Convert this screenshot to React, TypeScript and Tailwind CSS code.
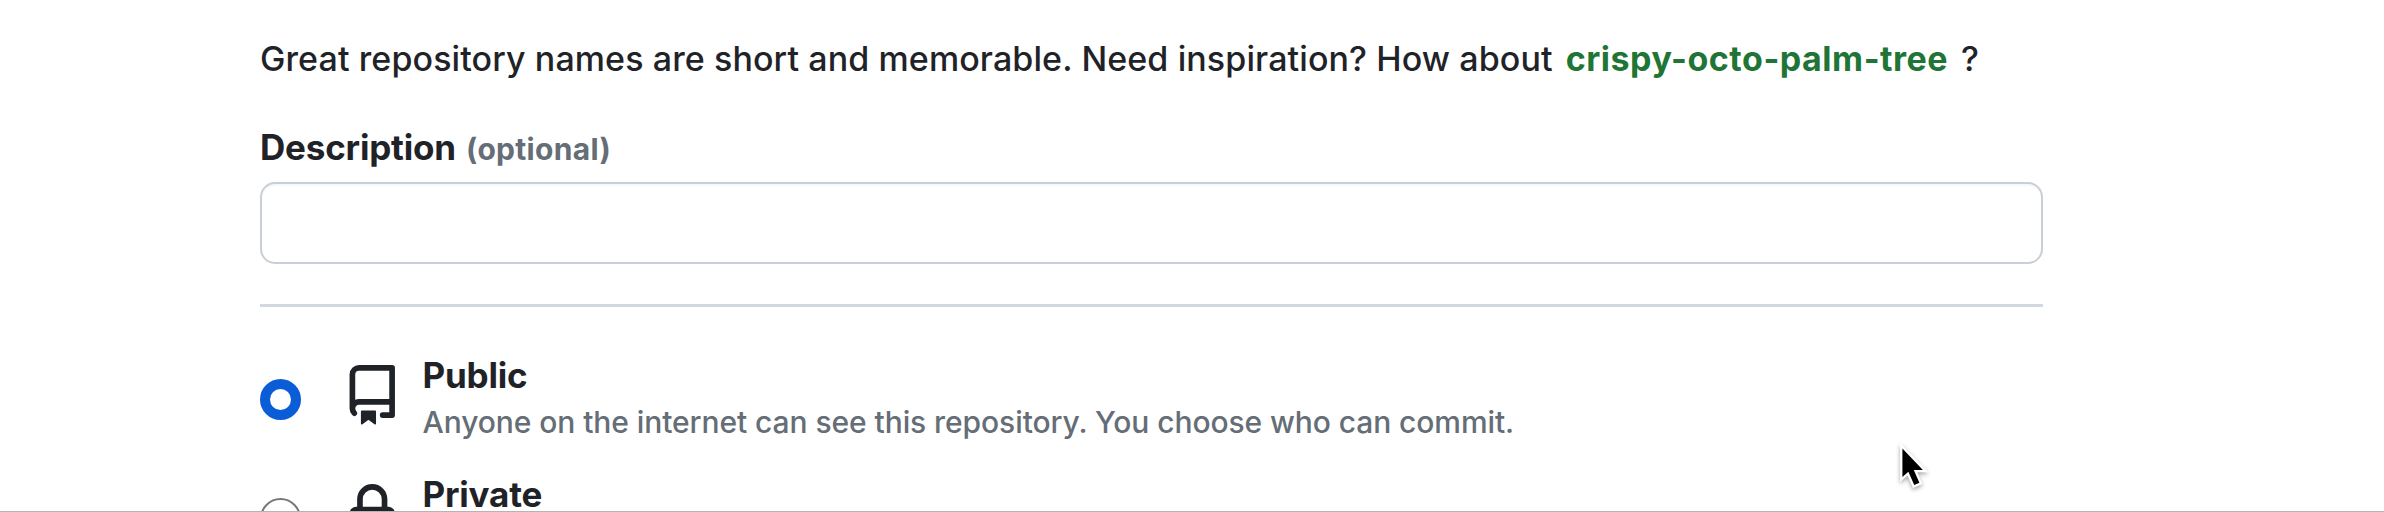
function RepoIcon() {
  return (
    <svg viewBox="0 0 16 16" className="h-[60.5px] w-[60.5px]" fill="currentColor" aria-hidden="true">
      <path d="M2 2.5A2.5 2.5 0 0 1 4.5 0h8.75a.75.75 0 0 1 .75.75v12.5a.75.75 0 0 1-.75.75h-2.5a.75.75 0 0 1 0-1.5h1.75v-2h-8a1 1 0 0 0-.714 1.7.75.75 0 1 1-1.072 1.05A2.495 2.495 0 0 1 2 11.5Zm10.5-1h-8a1 1 0 0 0-1 1v6.708A2.486 2.486 0 0 1 4.5 9h8ZM5 12.25a.25.25 0 0 1 .25-.25h3.5a.25.25 0 0 1 .25.25v3.25a.25.25 0 0 1-.4.2l-1.45-1.087a.249.249 0 0 0-.3 0L5.4 15.7a.25.25 0 0 1-.4-.2Z" />
    </svg>
  );
}

function LockIcon() {
  return (
    <svg viewBox="0 0 16 16" className="h-[60.5px] w-[60.5px]" fill="currentColor" aria-hidden="true">
      <path d="M4 4a4 4 0 0 1 8 0v2h.25c.966 0 1.75.784 1.75 1.75v5.5A1.75 1.75 0 0 1 12.25 15h-8.5A1.75 1.75 0 0 1 2 13.25v-5.5C2 6.784 2.784 6 3.75 6H4Zm8.25 3.5h-8.5a.25.25 0 0 0-.25.25v5.5c0 .138.112.25.25.25h8.5a.25.25 0 0 0 .25-.25v-5.5a.25.25 0 0 0-.25-.25ZM10.5 6V4a2.5 2.5 0 1 0-5 0v2Z" />
    </svg>
  );
}

function Pointer() {
  return (
    <svg
      viewBox="0 0 40 50"
      className="absolute left-[1896px] top-[441px] h-[50px] w-[40px] drop-shadow-[0_2px_2px_rgba(0,0,0,0.35)]"
      aria-hidden="true"
    >
      <path
        d="M6.4 7.6V36L12.4 30.7L18.2 44L23.4 41.8L17.8 29H26.9Z"
        fill="#000"
        stroke="#fff"
        strokeWidth="4.6"
        paintOrder="stroke"
      />
    </svg>
  );
}

export default function App() {
  return (
    <main className="relative flex h-[512px] w-[2384px] flex-col overflow-hidden border-b border-[#b4b4b4] bg-white pl-[260px] pt-[34px] font-['Inter',sans-serif] text-[#1f2328]">
      <p className="flex h-[48px] items-center whitespace-nowrap text-[34px] font-[450] tracking-[0.1px]">
        <span>Great repository names are short and memorable. Need inspiration? How about</span>
        <strong className="ml-[13px] font-bold tracking-[0.52px] text-[#1f7535]">crispy-octo-palm-tree</strong>
        <span className="ml-[13px]">?</span>
      </p>

      <label htmlFor="description" className="mt-[41px] flex h-[48px] items-baseline whitespace-nowrap text-[35px] font-bold leading-[48px]">
        <span className="tracking-[-0.18px]">Description</span>
        <span className="ml-[10px] text-[30px] tracking-[0.3px] text-[#656d76]">(optional)</span>
      </label>
      <input
        id="description"
        className="mt-[11px] h-[82px] w-[1783px] shrink-0 rounded-[15px] border-[2.5px] border-[#c9cfd7] bg-white px-[30px] text-[35px] shadow-[inset_0_2px_0_rgba(208,215,222,0.2)] outline-none"
      />
      <hr className="mt-[40px] h-[2.5px] w-[1783px] shrink-0 border-0 bg-[#d2d8df]" />

      <div className="mt-[44.5px] flex h-[119px] shrink-0 items-start">
        <span className="mt-[28px] h-[41px] w-[41px] rounded-full border-[10px] border-[#0b5cd7] bg-white" />
        <span className="ml-[41px] mt-[14px]">
          <RepoIcon />
        </span>
        <div className="ml-[20px] flex flex-col whitespace-nowrap">
          <span className="text-[35px] font-bold leading-[48px] tracking-[-0.2px]">Public</span>
          <span className="mt-px text-[30px] font-[450] leading-[45px] tracking-[-0.08px] text-[#656d76]">
            Anyone on the internet can see this repository. You choose who can commit.
          </span>
        </div>
      </div>

      <div className="flex h-[119px] shrink-0 items-start">
        <span className="mt-[28px] h-[41px] w-[41px] rounded-full border-[2.5px] border-[#767676] bg-white" />
        <span className="ml-[41px] mt-[14px]">
          <LockIcon />
        </span>
        <span className="ml-[20px] text-[35px] font-bold leading-[48px] tracking-[-0.2px]">Private</span>
      </div>

      <Pointer />
    </main>
  );
}
